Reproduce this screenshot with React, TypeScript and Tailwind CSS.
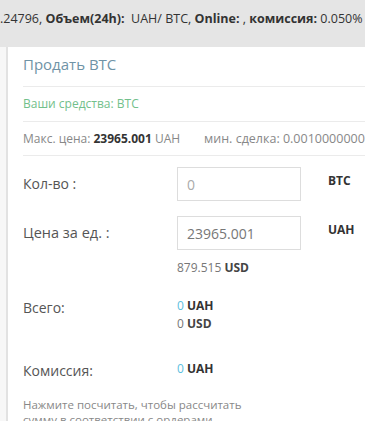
export default function App() {
  return (
    <div className="w-[365px] h-[421px] overflow-hidden bg-[#f7f7f7] font-['Open_Sans',sans-serif] text-[#666]">
      <div className="h-[47px] bg-[#e5e5e5] overflow-hidden whitespace-nowrap pt-[10px] text-[12.5px] text-[#333] leading-[18px]">
        <span>.24796, </span>
        <b>Объем(24h):</b>
        <span>&nbsp; UAH/ BTC, </span>
        <b>Online:</b>
        <span> , </span>
        <b>комиссия:</b>
        <span> 0.050%</span>
      </div>

      <div className="ml-[6px] w-[380px] h-[400px] bg-white border-l-2 border-[#e2e2e2] pl-[15px] pr-[20px]">
        <div className="h-[39px] pt-[7px] text-[15px] leading-[20px] text-[#6f93a6]">Продать BTC</div>
        <div className="border-t border-[#ebebeb]" />
        <div className="h-[34px] pt-[9px] text-[12px] leading-[16px] text-[#72c08b]">Ваши средства: BTC</div>
        <div className="border-t border-[#ebebeb]" />
        <div className="h-[33px] pt-[9px] text-[12px] leading-[16px] text-[#888] whitespace-nowrap">
          Макс. цена: <b className="text-[#333]">23965.001</b> UAH
          <span className="ml-[24px] text-[12.5px]">мин. сделка: 0.0010000000</span>
        </div>
        <div className="border-t border-[#ebebeb]" />

        <div className="flex items-start mt-[11px]">
          <div className="w-[154px] pt-[7px] text-[14px] leading-[20px] text-[#555]">Кол-во :</div>
          <div className="w-[124px] h-[34px] border border-[#ddd] px-[9px] flex items-center text-[14px] text-[#aaa]">0</div>
          <div className="ml-[27px] pt-[6px] text-[12px] font-bold text-[#333] leading-[16px]">BTC</div>
        </div>

        <div className="flex items-start mt-[15px]">
          <div className="w-[154px] pt-[7px] text-[14.5px] leading-[20px] text-[#555]">Цена за ед. :</div>
          <div>
            <div className="w-[124px] h-[34px] border border-[#ddd] px-[9px] flex items-center text-[14px] text-[#777]">23965.001</div>
            <div className="mt-[10px] text-[12px] leading-[16px] text-[#777]">
              879.515 <b className="text-[#444]">USD</b>
            </div>
          </div>
          <div className="ml-[27px] pt-[6px] text-[12px] font-bold text-[#333] leading-[16px]">UAH</div>
        </div>

        <div className="flex items-start mt-[21px]">
          <div className="w-[154px] pt-[1px] text-[14px] leading-[20px] text-[#555]">Всего:</div>
          <div className="text-[12px] leading-[18px] text-[#777]">
            <div>
              <span className="text-[#5bc0de]">0</span> <b className="text-[#333]">UAH</b>
            </div>
            <div>
              0 <b className="text-[#444]">USD</b>
            </div>
          </div>
        </div>

        <div className="flex items-start mt-[27px]">
          <div className="w-[154px] pt-[1px] text-[14px] leading-[20px] text-[#555]">Комиссия:</div>
          <div className="text-[12px] leading-[18px] text-[#777]">
            <span className="text-[#5bc0de]">0</span> <b className="text-[#333]">UAH</b>
          </div>
        </div>

        <div className="mt-[16px] w-[240px] text-[11.5px] leading-[15px] text-[#888]">
          Нажмите посчитать, чтобы рассчитать сумму в соответствии с ордерами.
        </div>
      </div>
    </div>
  );
}
